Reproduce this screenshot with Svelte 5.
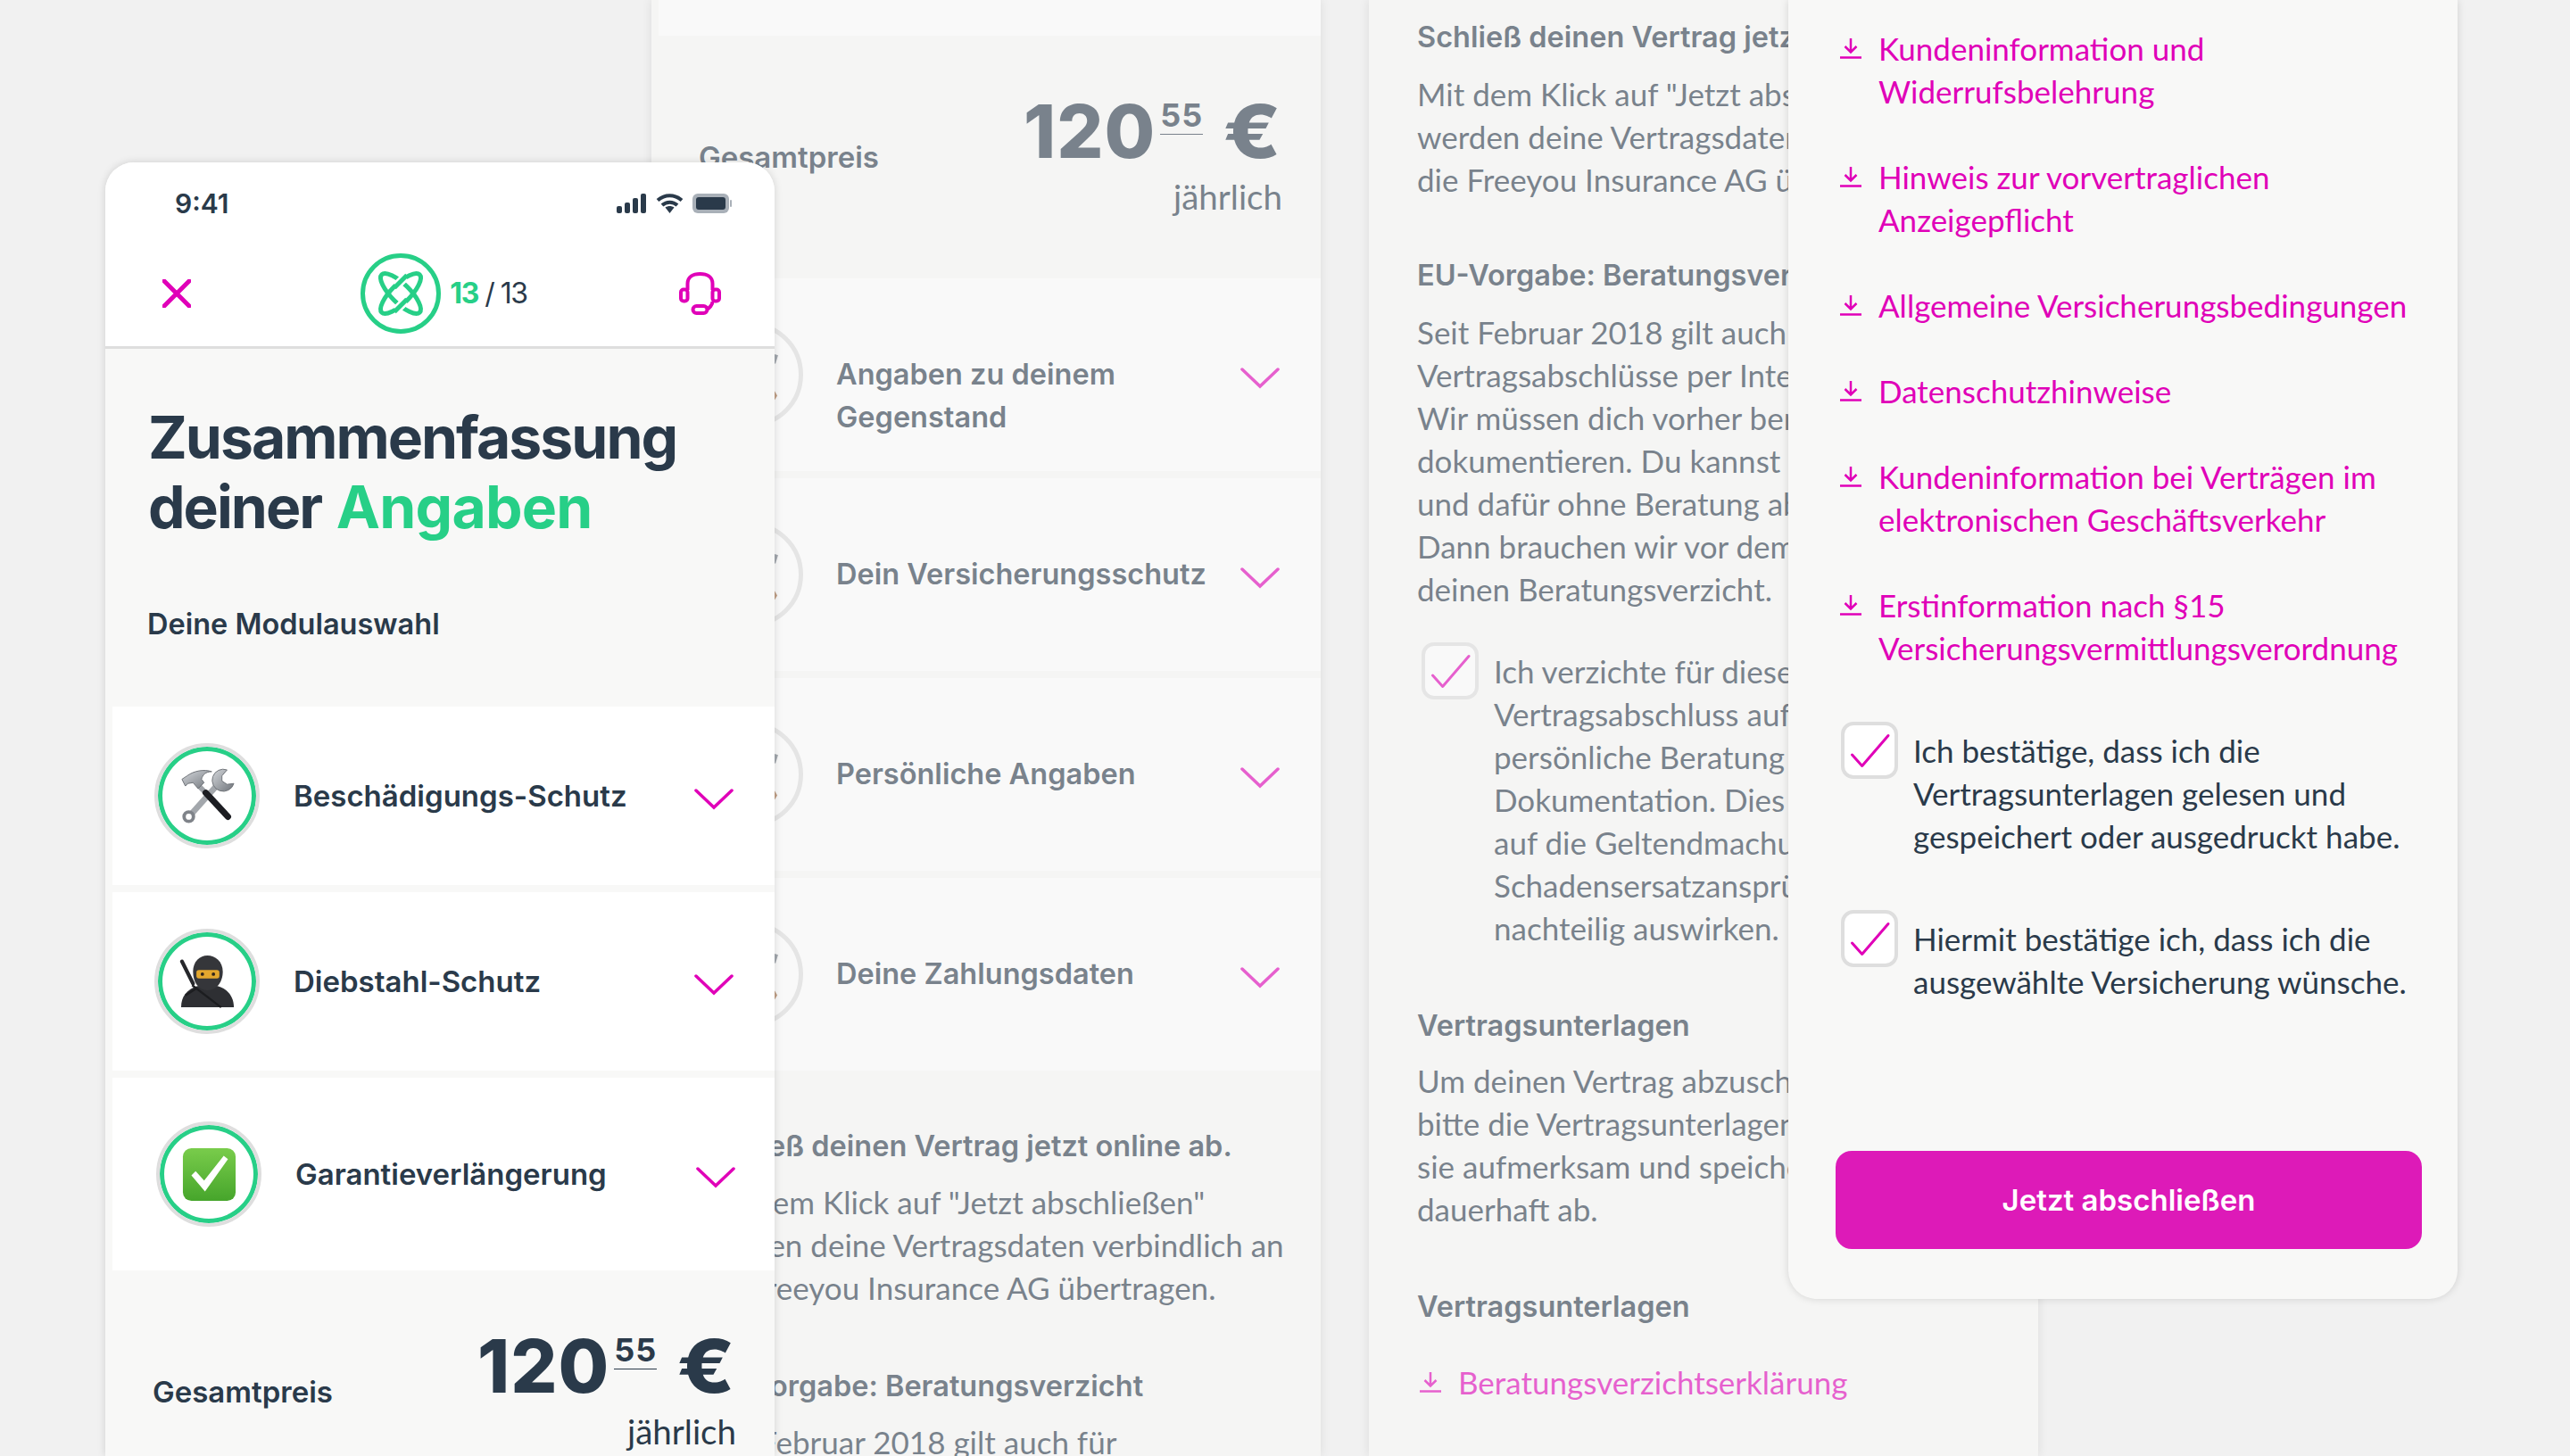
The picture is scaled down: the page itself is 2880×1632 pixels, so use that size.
<script>
    const modules = [
        { name: "Beschädigungs-Schutz", icon: "tools" },
        { name: "Diebstahl-Schutz", icon: "ninja" },
        { name: "Garantieverlängerung", icon: "check", last: true }
    ]
    const steps = [["Angaben zu deinem", "Gegenstand"], ["Dein Versicherungsschutz"], ["Persönliche Angaben"], ["Deine Zahlungsdaten"]]
    const closing = ['Mit dem Klick auf "Jetzt abschließen"', "werden deine Vertragsdaten verbindlich an", "die Freeyou Insurance AG übertragen."]
    const advice = ["Seit Februar 2018 gilt auch für", "Vertragsabschlüsse per Internet die EU-Regel:", "Wir müssen dich vorher beraten und das", "dokumentieren. Du kannst auf uns verzichten", "und dafür ohne Beratung abschließen.", "Dann brauchen wir vor dem Abschluss", "deinen Beratungsverzicht."]
    const waiver = ["Ich verzichte für diesen", "Vertragsabschluss auf eine", "persönliche Beratung und", "Dokumentation. Dies kann sich", "auf die Geltendmachung von", "Schadensersatzansprüchen", "nachteilig auswirken."]
    const papers = ["Um deinen Vertrag abzuschließen, lade", "bitte die Vertragsunterlagen herunter, lies", "sie aufmerksam und speichere sie", "dauerhaft ab."]
    const downloads = [
        ["Kundeninformation und", "Widerrufsbelehrung"],
        ["Hinweis zur vorvertraglichen", "Anzeigepflicht"],
        ["Allgemeine Versicherungsbedingungen"],
        ["Datenschutzhinweise"],
        ["Kundeninformation bei Verträgen im", "elektronischen Geschäftsverkehr"],
        ["Erstinformation nach §15", "Versicherungsvermittlungsverordnung"]
    ]
</script>

{#snippet lines(list)}
    {#each list as line}<span class="line">{line}</span>{/each}
{/snippet}

{#snippet chevron()}
    <svg class="chevron" viewBox="0 0 44 24"><polyline points="2,2 22,21 42,2" /></svg>
{/snippet}

{#snippet download()}
    <svg class="download" viewBox="0 0 24 24"><path d="M12 1v15M5.500 10l6.500 6.500 6.500-6.500M0 22.500h24" /></svg>
{/snippet}

{#snippet tick()}
    <span class="box"><svg viewBox="0 0 56 56"><polyline points="8.500,33 19.700,45.500 49,11.500" /></svg></span>
{/snippet}

{#snippet price()}
    <div class="total">
        <span class="total-label">Gesamtpreis</span>
        <div class="amount">
            <div class="figure"><span class="euros">120</span><span class="cents">55</span><span class="euros sign">€</span></div>
            <div class="period">jährlich</div>
        </div>
    </div>
{/snippet}

{#snippet emoji(kind)}
    {#if kind === "tools"}
        <svg class="emoji" viewBox="0 0 64 64">
            <defs>
                <linearGradient id="steel" x1="0" y1="0" x2="1" y2="1"><stop offset="0" stop-color="#d4d7db" /><stop offset="1" stop-color="#6f747a" /></linearGradient>
            </defs>
            <path d="M12 54l34-38" stroke="#a3a7ac" stroke-width="7" />
            <circle cx="10" cy="56" r="5.500" fill="#fff" stroke="#7f8389" stroke-width="4" />
            <path d="M55 1A13 13 0 1 0 63 17l-8 1-6-4V8z" fill="url(#steel)" stroke="#6d7177" stroke-width="1" />
            <path d="M22 20l8 8" stroke="#9ea2a7" stroke-width="6" />
            <path d="M30 28l26 28" stroke="#1c1d22" stroke-width="7.500" stroke-linecap="round" />
            <path d="M2 12l6-4C16 2 28 0 37 3c-7 0-11 4-12 9l3 4-7 7-6-7-6 1-3 3z" fill="url(#steel)" stroke="#6c7076" stroke-width="1" />
        </svg>
    {:else if kind === "ninja"}
        <svg class="emoji" viewBox="0 0 64 64">
            <path d="M2 8l13 26" stroke="#26272b" stroke-width="4.500" stroke-linecap="round" />
            <path d="M1 62c0-13 7-21 19-25h24c11 3 19 12 19 25z" fill="#2e2f33" />
            <path d="M14 36l34 26M6 48l14-9" stroke="#1c1d20" stroke-width="2.500" />
            <path d="M15 20C15 8 23 1 32 1s18 7 18 19c0 12-7 22-18 22S15 32 15 20z" fill="#35363a" />
            <rect x="19" y="18" width="27" height="10" rx="3" fill="#e3a72e" />
            <circle cx="26" cy="23" r="2" fill="#30241a" /><circle cx="39" cy="23" r="2" fill="#30241a" />
        </svg>
    {:else}
        <svg class="emoji" viewBox="0 0 64 64">
            <defs>
                <linearGradient id="leaf" x1="0" y1="0" x2="0" y2="1"><stop offset="0" stop-color="#79cc4b" /><stop offset="1" stop-color="#46a52b" /></linearGradient>
            </defs>
            <rect x="1" y="1" width="62" height="62" rx="10" fill="url(#leaf)" />
            <path d="M11 33l5-5 10 11L49 10l5 4-27 38z" fill="#fff" />
        </svg>
    {/if}
{/snippet}

<main class="canvas">
    <!-- rear left screen -->
    <section class="phone faded second">
        <div class="row stub"></div>
        {@render price()}
        {#each steps as step}
            <div class="row step">
                <span class="badge plain">
                    <svg class="emoji" viewBox="0 0 64 64"><path d="M62 8l-3 10" stroke="#6f7780" stroke-width="4" /><path d="M60 51l3 5-3 5-2-5z" fill="#a06a40" /></svg>
                </span>
                <div class="row-label" class:two={step.length > 1}>{@render lines(step)}</div>
                {@render chevron()}
            </div>
        {/each}
        <div class="copy second-copy">
            <h3>Schließ deinen Vertrag jetzt online ab.</h3>
            <p>{@render lines(closing)}</p>
            <h3 class="next">EU-Vorgabe: Beratungsverzicht</h3>
            <p>{@render lines(advice)}</p>
        </div>
    </section>

    <!-- rear right screen -->
    <section class="phone faded third">
        <div class="copy third-copy">
            <h3>Schließ deinen Vertrag jetzt online ab.</h3>
            <p>{@render lines(closing)}</p>
            <h3 class="next">EU-Vorgabe: Beratungsverzicht</h3>
            <p>{@render lines(advice)}</p>
            <div class="consent waiver">{@render tick()}<div>{@render lines(waiver)}</div></div>
            <h3 class="next docs">Vertragsunterlagen</h3>
            <p>{@render lines(papers)}</p>
            <h3 class="next docs">Vertragsunterlagen</h3>
            <div class="file single">{@render download()}<div>Beratungsverzichtserklärung</div></div>
        </div>
    </section>

    <!-- front left screen -->
    <section class="phone first">
        <div class="status">
            <span class="time">9:41</span>
            <div class="status-icons">
                <svg width="34" height="22" viewBox="0 0 34 22"><rect x="0" y="14" width="6" height="8" rx="2" /><rect x="9" y="10" width="6" height="12" rx="2" /><rect x="18" y="5" width="6" height="17" rx="2" /><rect x="27" y="0" width="6" height="22" rx="2" /></svg>
                <svg width="31" height="22" viewBox="0 0 31 22"><path d="M2 7.500c8-7 19-7 27 0M7 13c5-4.500 12-4.500 17 0" fill="none" stroke="#2a3a4a" stroke-width="4" /><path d="M10.500 15.500c3-2 7-2 10 0L15.500 22z" /></svg>
                <svg width="44" height="22" viewBox="0 0 44 22"><rect x="0" y="0" width="41" height="22" rx="6" fill="#a9b0b8" /><rect x="4" y="4" width="33" height="14" rx="3" /><rect x="42" y="7" width="2" height="8" rx="1" fill="#a9b0b8" /></svg>
            </div>
        </div>
        <nav class="topbar">
            <svg class="close" viewBox="0 0 32 32"><path d="M2 2l28 28M30 2L2 30" /></svg>
            <div class="progress">
                <svg class="logo" viewBox="0 0 90 90">
                    <circle cx="45" cy="45" r="42.500" />
                    <ellipse cx="45" cy="45" rx="30" ry="10.500" transform="rotate(-45 45 45)" />
                    <ellipse cx="45" cy="45" rx="30" ry="10.500" transform="rotate(45 45 45)" />
                    <path class="gap" d="M40 36.500l10-10M40 63.500l10-10" />
                    <path d="M38 38.500l14-14M38 65.500l14-14" />
                </svg>
                <span class="count"><b>13</b> / 13</span>
            </div>
            <svg class="headset" viewBox="0 0 47 48">
                <path d="M9.500 20v-7C9.500 5.500 15.500 2 23.500 2s14 3.500 14 11v7M37.500 33c0 4-4 7.500-6 8.500" />
                <rect x="2" y="19.500" width="7.500" height="13" rx="3" />
                <rect x="37.500" y="19.500" width="7.500" height="13" rx="3" />
                <rect x="15.500" y="38" width="16" height="8" rx="4" />
            </svg>
        </nav>
        <div class="panel">
            <h1>Zusammenfassung<br />deiner <em>Angaben</em></h1>
            <h2>Deine Modulauswahl</h2>
            {#each modules as item}
                <div class="row module" class:last={item.last}>
                    <span class="badge">{@render emoji(item.icon)}</span>
                    <div class="row-label">{item.name}</div>
                    {@render chevron()}
                </div>
            {/each}
            {@render price()}
        </div>
    </section>

    <!-- front right screen -->
    <section class="phone fourth">
        {#each downloads as file}
            <div class="file">{@render download()}<div>{@render lines(file)}</div></div>
        {/each}
        <div class="consent">{@render tick()}<div>{@render lines(["Ich bestätige, dass ich die", "Vertragsunterlagen gelesen und", "gespeichert oder ausgedruckt habe."])}</div></div>
        <div class="consent">{@render tick()}<div>{@render lines(["Hiermit bestätige ich, dass ich die", "ausgewählte Versicherung wünsche."])}</div></div>
        <button class="submit">Jetzt abschließen</button>
    </section>
</main>

<style>
    :global(body) {
        margin: 0;
        background: #f1f1f1;
    }

    .canvas {
        position: relative;
        width: 2880px;
        height: 1632px;
        overflow: hidden;
        background: #f1f1f1;
        font-family: "Lato", "Liberation Sans", sans-serif;
        font-size: 35px;
        line-height: 48px;
        color: #2a3a4a;
    }

    .phone {
        position: absolute;
        width: 750px;
        background: #f8f8f7;
        box-shadow: 0 0 10px rgba(0, 0, 0, 0.14);
    }

    .faded {
        opacity: 0.6;
        height: 1632px;
    }

    .second { left: 730px; top: 0; overflow: hidden; }
    .third { left: 1534px; top: 0; overflow: hidden; }
    .first { left: 118px; top: 182px; height: 1450px; border-radius: 32px 32px 0 0; overflow: hidden; }
    .fourth {
        left: 2004px;
        top: 0;
        height: 1456px;
        box-sizing: border-box;
        padding-top: 30px;
        border-radius: 0 0 32px 32px;
    }

    .line {
        display: block;
        white-space: nowrap;
    }

    /* status bar and top navigation */
    .status {
        height: 92px;
        background: #fff;
        display: flex;
        align-items: center;
        justify-content: space-between;
        padding: 0 48px 0 78px;
        box-sizing: border-box;
    }

    .time {
        font-family: "Inter", sans-serif;
        font-size: 30px;
        font-weight: 600;
    }

    .status-icons {
        display: flex;
        align-items: center;
        gap: 10px;
    }

    .status-icons svg {
        fill: #2a3a4a;
        display: block;
    }

    .topbar {
        height: 117px;
        background: #fff;
        border-bottom: 3px solid #dedede;
        display: flex;
        align-items: center;
        justify-content: space-between;
        padding: 0 60px 4px 64px;
        box-sizing: border-box;
    }

    .close {
        width: 32px;
        height: 32px;
    }

    .close path {
        fill: none;
        stroke: #e000b8;
        stroke-width: 5;
        stroke-linecap: round;
    }

    .progress {
        display: flex;
        align-items: center;
        gap: 10px;
        margin-left: 20px;
    }

    .logo {
        width: 90px;
        height: 90px;
    }

    .logo circle, .logo ellipse, .logo path {
        fill: none;
        stroke: #27cf87;
        stroke-width: 5;
    }

    .logo .gap {
        stroke: #fff;
        stroke-width: 10;
    }

    .count {
        font-family: "Inter", sans-serif;
        font-size: 32px;
        letter-spacing: -1.500px;
    }

    .count b {
        color: #27cf87;
        font-weight: 700;
    }

    .headset {
        width: 47px;
        height: 48px;
    }

    .headset path, .headset rect {
        fill: none;
        stroke: #e000b8;
        stroke-width: 4;
    }

    /* main column of the first screen */
    .panel {
        padding-top: 60px;
    }

    h1 {
        margin: 0 0 0 48px;
        font-family: "Inter", sans-serif;
        font-size: 66px;
        line-height: 78px;
        font-weight: 700;
        letter-spacing: -2px;
    }

    h1 em {
        font-style: normal;
        color: #27cf87;
        margin-left: 3px;
        letter-spacing: -0.800px;
    }

    h2 {
        margin: 69px 0 68px 47px;
        font-family: "Inter", sans-serif;
        font-size: 32.500px;
        line-height: 48px;
        font-weight: 600;
    }

    .row {
        background: #fff;
        display: flex;
        align-items: center;
        margin: 0 0 8px 8px;
    }

    .module {
        height: 200px;
    }

    .module.last {
        height: 216px;
        margin-bottom: 0;
        padding-left: 2px;
    }

    .module.last .chevron {
        margin-right: 44px;
    }

    .step {
        height: 216px;
    }

    .stub {
        height: 40px;
        margin-bottom: 0;
    }

    .badge {
        flex: none;
        width: 118px;
        height: 118px;
        margin-left: 47px;
        box-sizing: border-box;
        border-radius: 50%;
        border: 4px solid #dedede;
        box-shadow: inset 0 0 0 5px #27cf87;
        background: #fff;
        display: flex;
        align-items: center;
        justify-content: center;
    }

    .badge.plain {
        box-shadow: none;
        border-width: 5px;
        margin-left: 44px;
    }

    .emoji {
        width: 61px;
        height: 61px;
        overflow: visible;
    }

    .row-label {
        flex: 1;
        margin-left: 38px;
        font-family: "Inter", sans-serif;
        font-size: 33px;
        font-weight: 600;
    }

    .step .row-label {
        margin-left: 37px;
        font-size: 32.500px;
    }

    .row-label.two {
        padding-top: 48px;
    }

    .chevron {
        flex: none;
        width: 44px;
        height: 24px;
        margin-right: 46px;
        margin-top: 8px;
    }

    .chevron polyline {
        fill: none;
        stroke: #e000b8;
        stroke-width: 3.500;
        stroke-linecap: round;
    }

    /* total price block */
    .total {
        height: 272px;
        box-sizing: border-box;
        padding: 60px 43px 0 53px;
        display: flex;
        justify-content: space-between;
        align-items: flex-start;
    }

    .total-label {
        margin-top: 52px;
        font-family: "Inter", sans-serif;
        font-size: 33px;
        font-weight: 600;
    }

    .amount {
        text-align: right;
    }

    .figure {
        display: flex;
        align-items: flex-start;
        justify-content: flex-end;
        margin-right: 1px;
        line-height: 96px;
        font-family: "Inter", sans-serif;
    }

    .euros {
        font-size: 82px;
        font-weight: 800;
        letter-spacing: 1px;
    }

    .sign {
        margin-left: 31px;
        transform: scaleX(1.15);
        transform-origin: right;
        letter-spacing: 0;
    }

    .cents {
        margin: 12px 0 0 5px;
        height: 38px;
        font-size: 36px;
        line-height: 34px;
        font-weight: 700;
        letter-spacing: 1px;
        border-bottom: 1px solid #2a3a4a;
    }

    .period {
        margin-top: 0;
        font-size: 38.500px;
    }

    /* legal copy */
    .copy {
        padding: 0 54px;
    }

    .second-copy {
        padding-top: 53px;
    }

    .second-copy h3 {
        margin-bottom: 14px;
    }

    .second-copy h3.next {
        margin-top: 63px;
    }

    .third-copy {
        padding-top: 18px;
    }

    h3 {
        margin: 0 0 15px;
        font-family: "Inter", sans-serif;
        font-size: 32.500px;
        line-height: 48px;
        font-weight: 600;
        white-space: nowrap;
    }

    h3.next {
        margin-top: 60px;
    }

    h3.docs {
        margin-top: 62px;
        margin-bottom: 13px;
    }

    .copy p {
        margin: 0;
    }

    .consent {
        display: flex;
        gap: 17px;
        margin: 59px 0 0 59px;
    }

    .consent > div {
        padding-top: 8px;
    }

    .waiver {
        margin: 36px 0 0 5px;
    }

    .box {
        flex: none;
        width: 64px;
        height: 64px;
        box-sizing: border-box;
        border: 4px solid #dedede;
        border-radius: 14px;
        background: #fff;
    }

    .box svg {
        display: block;
        width: 56px;
        height: 56px;
    }

    .box polyline {
        fill: none;
        stroke: #e000b8;
        stroke-width: 3;
        stroke-linecap: round;
        stroke-linejoin: round;
    }

    .file {
        display: flex;
        gap: 19px;
        margin: 0 0 48px 58px;
        color: #e000b8;
    }

    .file.single {
        margin: 36px 0 0 3px;
    }

    .download {
        flex: none;
        width: 24px;
        height: 24px;
        margin-top: 12px;
    }

    .download path {
        fill: none;
        stroke: #e000b8;
        stroke-width: 2.500;
    }

    .submit {
        display: block;
        width: 657px;
        height: 110px;
        margin: 166px 0 0 53px;
        border: none;
        border-radius: 18px;
        background: #dd1ab8;
        color: #fff;
        font-family: "Inter", sans-serif;
        font-size: 33px;
        font-weight: 600;
    }
</style>
